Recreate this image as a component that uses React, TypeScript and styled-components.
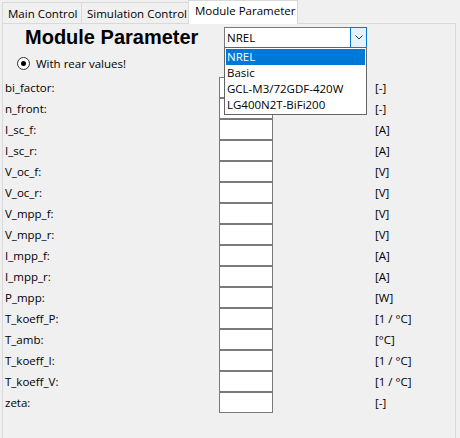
import React from 'react';
import styled, { createGlobalStyle } from 'styled-components';

const Global = createGlobalStyle`
  html, body { margin: 0; padding: 0; background: #f0f0f0; }
  body {
    font-family: "Segoe UI", "Open Sans", sans-serif;
    font-size: 11.5px;
    color: #000;
  }
`;

const Window = styled.div`
  width: 460px;
  height: 438px;
  overflow: hidden;
  display: flex;
  flex-direction: column;
`;

const TabBar = styled.div`
  display: flex;
  align-items: flex-end;
  height: 23px;
  padding-left: 2px;
  position: relative;
  z-index: 2;
`;

const Tab = styled.div<{ $active?: boolean; $w: number }>`
  box-sizing: border-box;
  width: ${p => p.$w}px;
  height: ${p => (p.$active ? 24 : 21)}px;
  margin-bottom: ${p => (p.$active ? -1 : 0)}px;
  margin-left: -1px;
  &:first-child { margin-left: 0; }
  border: 1px solid #d9d9d9;
  border-bottom: none;
  background: ${p => (p.$active ? '#ffffff' : '#f0f0f0')};
  display: flex;
  align-items: flex-start;
  padding: ${p => (p.$active ? '2px 0 0 6px' : '3px 0 0 5px')};
  line-height: 16px;
  white-space: nowrap;
`;

const Panel = styled.div`
  box-sizing: border-box;
  margin-left: 2px;
  width: 454px;
  flex: 1;
  border: 1px solid #d9d9d9;
  border-bottom: none;
  background: #f0f0f0;
  padding: 3px 0 0 2px;
  position: relative;
  z-index: 1;
`;

const Header = styled.div`
  display: flex;
  align-items: center;
  height: 21px;
`;

const Title = styled.h1`
  margin: 0 0 0 20px;
  width: 199px;
  font-family: "Liberation Sans", Arial, sans-serif;
  font-weight: bold;
  font-size: 20px;
  line-height: 21px;
  white-space: nowrap;
`;

const Combo = styled.div`
  position: relative;
  box-sizing: border-box;
  width: 143px;
  height: 21px;
  border: 1px solid #7a7a7a;
  background: #fff;
  display: flex;
  align-items: center;
`;

const ComboText = styled.span`
  flex: 1;
  padding-left: 2px;
  line-height: 19px;
`;

const ComboButton = styled.div`
  box-sizing: border-box;
  width: 17px;
  height: 21px;
  margin: -1px -1px -1px 0;
  border: 1px solid #0078d7;
  background: #e5f1fb;
  display: flex;
  align-items: center;
  justify-content: center;
`;

const DropList = styled.ul`
  position: absolute;
  left: -1px;
  top: 100%;
  width: 143px;
  box-sizing: border-box;
  margin: 0;
  padding: 1px;
  list-style: none;
  background: #fff;
  border: 1px solid #646464;
  z-index: 5;
`;

const DropItem = styled.li<{ $sel?: boolean }>`
  height: 16px;
  line-height: 16px;
  padding-left: 1px;
  white-space: nowrap;
  background: ${p => (p.$sel ? '#0078d7' : 'transparent')};
  color: ${p => (p.$sel ? '#fff' : '#000')};
`;

const RadioRow = styled.label`
  display: flex;
  align-items: center;
  height: 13px;
  margin: 9px 0 0 12px;
  gap: 6px;
`;

const RadioCircle = styled.span`
  box-sizing: border-box;
  width: 13px;
  height: 13px;
  border-radius: 50%;
  border: 1px solid #333;
  background: #fff;
  display: flex;
  align-items: center;
  justify-content: center;
  &::after {
    content: '';
    width: 5px;
    height: 5px;
    border-radius: 50%;
    background: #000;
  }
`;

const Grid = styled.div`
  display: grid;
  grid-template-columns: 214px 54px auto;
  grid-auto-rows: 21px;
  margin-top: 7px;
  align-items: center;
`;

const Label = styled.span`
  white-space: nowrap;
`;

const Box = styled.div`
  box-sizing: border-box;
  width: 54px;
  height: 21px;
  border: 1px solid #7a7a7a;
  background: #fff;
`;

const Unit = styled.span`
  padding-left: 102px;
  white-space: nowrap;
`;

const rows: [string, string][] = [
  ['bi_factor:', '[-]'],
  ['n_front:', '[-]'],
  ['I_sc_f:', '[A]'],
  ['I_sc_r:', '[A]'],
  ['V_oc_f:', '[V]'],
  ['V_oc_r:', '[V]'],
  ['V_mpp_f:', '[V]'],
  ['V_mpp_r:', '[V]'],
  ['I_mpp_f:', '[A]'],
  ['I_mpp_r:', '[A]'],
  ['P_mpp:', '[W]'],
  ['T_koeff_P:', '[1 / °C]'],
  ['T_amb:', '[°C]'],
  ['T_koeff_I:', '[1 / °C]'],
  ['T_koeff_V:', '[1 / °C]'],
  ['zeta:', '[-]'],
];

const options = ['NREL', 'Basic', 'GCL-M3/72GDF-420W', 'LG400N2T-BiFi200'];

export default function App() {
  return (
    <Window>
      <Global />
      <TabBar>
        <Tab $w={80}>Main Control</Tab>
        <Tab $w={108}>Simulation Control</Tab>
        <Tab $w={110} $active>Module Parameter</Tab>
      </TabBar>
      <Panel>
        <Header>
          <Title>Module Parameter</Title>
          <Combo>
            <ComboText>NREL</ComboText>
            <ComboButton>
              <svg width="8" height="5" viewBox="0 0 8 5">
                <path d="M0.5 0.5 L4 4 L7.5 0.5" fill="none" stroke="#333" strokeWidth="1" />
              </svg>
            </ComboButton>
            <DropList>
              {options.map((o, i) => (
                <DropItem key={o} $sel={i === 0}>{o}</DropItem>
              ))}
            </DropList>
          </Combo>
        </Header>
        <RadioRow>
          <RadioCircle />
          <span>With rear values!</span>
        </RadioRow>
        <Grid>
          {rows.map(([l, u]) => (
            <React.Fragment key={l}>
              <Label>{l}</Label>
              <Box />
              <Unit>{u}</Unit>
            </React.Fragment>
          ))}
        </Grid>
      </Panel>
    </Window>
  );
}
